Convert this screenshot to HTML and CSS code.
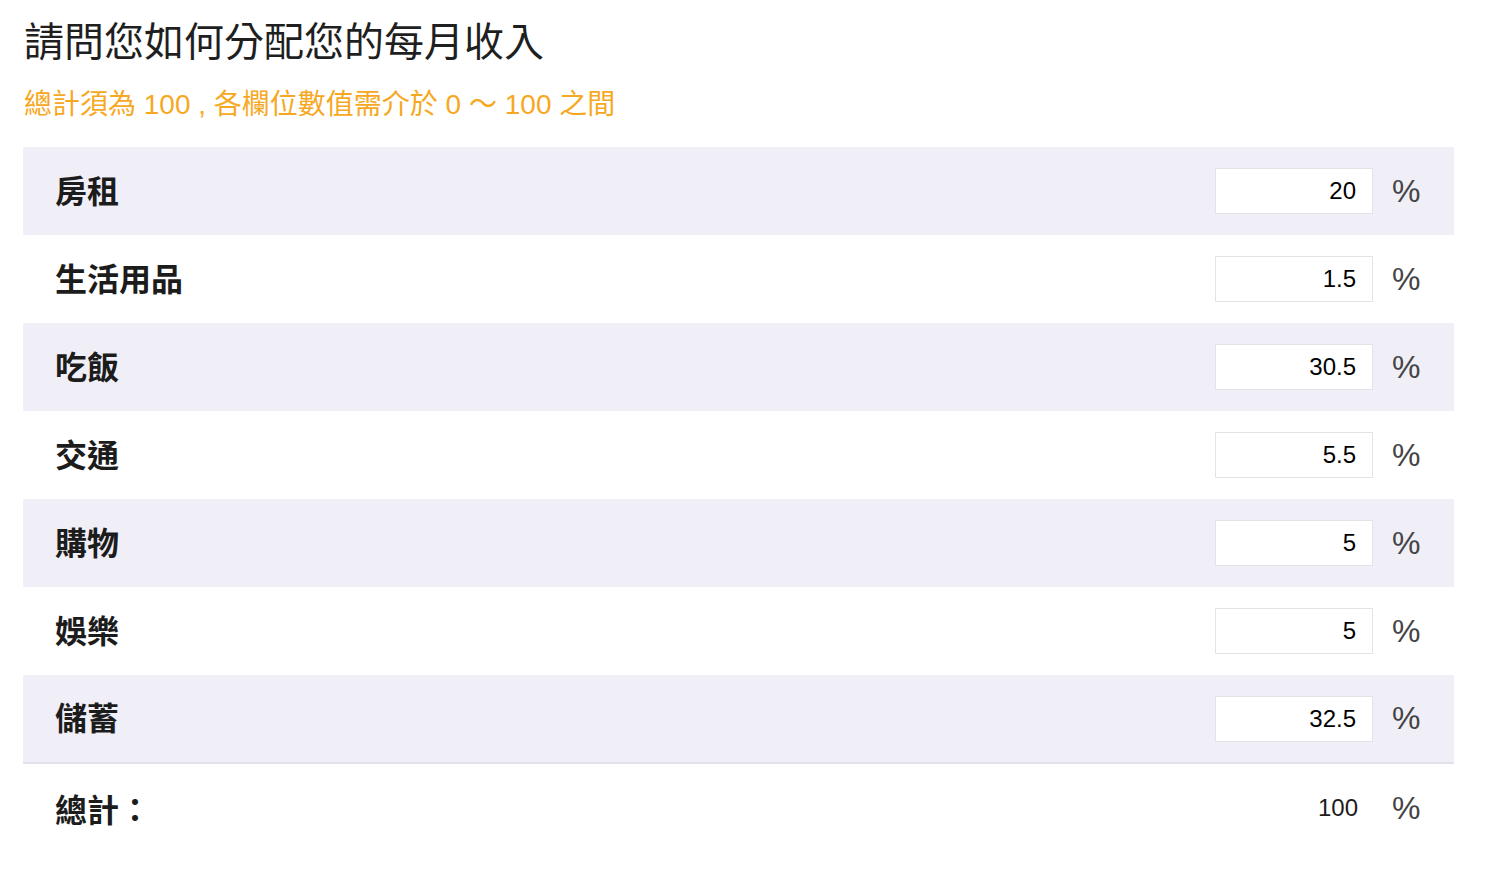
FILE: index.html
```html
<!DOCTYPE html>
<html lang="zh-Hant">
<head>
    <meta charset="UTF-8">
    <meta name="viewport" content="width=device-width, initial-scale=1.0">
    <title>每月收入分配</title>
    <link rel="stylesheet" href="styles.css">
</head>
<body>

    <div id="budget-container">
        <h1 class="question">請問您如何分配您的每月收入</h1>
        <p class="hint">總計須為 100 , 各欄位數值需介於 0 ～ 100 之間</p>

        <div class="budget-list">
            <div class="budget-row">
                <span class="row-label">房租</span>
                <input class="row-input" type="text" value="20">
                <span class="unit">%</span>
            </div>
            <div class="budget-row">
                <span class="row-label">生活用品</span>
                <input class="row-input" type="text" value="1.5">
                <span class="unit">%</span>
            </div>
            <div class="budget-row">
                <span class="row-label">吃飯</span>
                <input class="row-input" type="text" value="30.5">
                <span class="unit">%</span>
            </div>
            <div class="budget-row">
                <span class="row-label">交通</span>
                <input class="row-input" type="text" value="5.5">
                <span class="unit">%</span>
            </div>
            <div class="budget-row">
                <span class="row-label">購物</span>
                <input class="row-input" type="text" value="5">
                <span class="unit">%</span>
            </div>
            <div class="budget-row">
                <span class="row-label">娛樂</span>
                <input class="row-input" type="text" value="5">
                <span class="unit">%</span>
            </div>
            <div class="budget-row last">
                <span class="row-label">儲蓄</span>
                <input class="row-input" type="text" value="32.5">
                <span class="unit">%</span>
            </div>
            <div class="budget-row total">
                <span class="row-label">總計：</span>
                <span class="total-value">100</span>
                <span class="unit">%</span>
            </div>
        </div>
    </div>

</body>
</html>
```

FILE: styles.css
```css
body {
    font-family: "Liberation Sans", "Noto Sans CJK TC", sans-serif;
    margin: 0;
    padding: 0;
    background-color: #fff;
    color: #222;
}

#budget-container {
    width: 1431px;
    padding: 0 23px;
}

.question {
    font-family: "Noto Sans CJK TC", sans-serif;
    font-size: 40px;
    font-weight: 400;
    line-height: 50px;
    margin: 14px 0 0 1px;
    color: #1f1f1f;
}

.hint {
    font-size: 28px;
    line-height: 36px;
    margin: 23px 0 24px 1px;
    color: #f7a823;
}

.budget-row {
    display: flex;
    align-items: center;
    height: 88px;
    padding: 0 34px 0 32px;
}

.budget-row:nth-child(odd) {
    background-color: #f0eff8;
}

.budget-row.last {
    border-bottom: 2px solid #e3e2ea;
    height: 87px;
}

.budget-row.total {
    background-color: #fff;
}

.row-label {
    flex: 1;
    padding-bottom: 5px;
    font-family: "Noto Sans CJK TC", sans-serif;
    font-size: 32px;
    font-weight: 700;
    color: #1c1c1c;
}

.total .row-label {
    padding-bottom: 0;
}

.row-input {
    box-sizing: border-box;
    width: 158px;
    height: 46px;
    padding: 0 16px 0 8px;
    border: 1px solid #e2e2e8;
    background: #fff;
    text-align: right;
    font-family: "Liberation Sans", sans-serif;
    font-size: 24px;
    color: #000;
    outline: none;
}

.total-value {
    box-sizing: border-box;
    width: 158px;
    padding: 0 15px 0 0;
    text-align: right;
    font-size: 24px;
    color: #1c1c1c;
}

.unit {
    width: 28px;
    margin-left: 19px;
    font-size: 32px;
    color: #444;
}
```
